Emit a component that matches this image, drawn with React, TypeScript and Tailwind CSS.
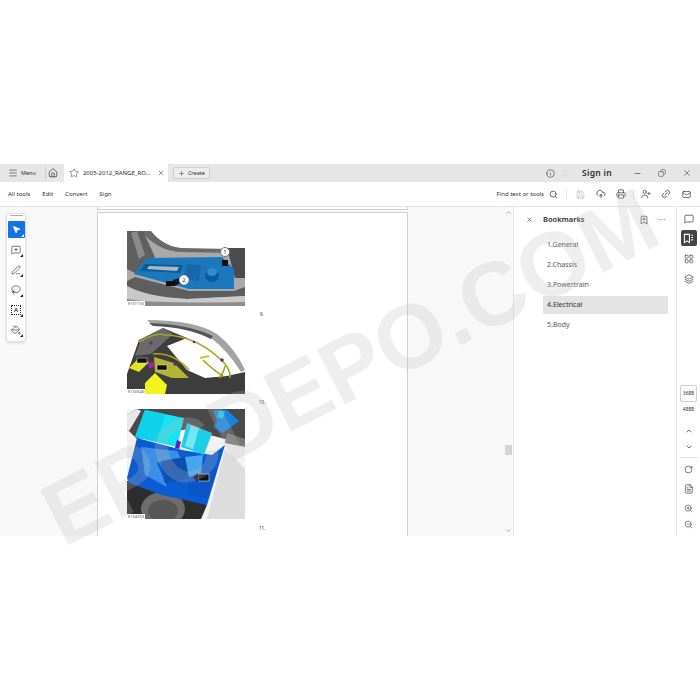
import {
  Bell,
  BookmarkPlus,
  ChevronDown,
  ChevronUp,
  CircleAlert,
  CloudUpload,
  Copy,
  Ellipsis,
  FileText,
  Home,
  Layers,
  LayoutGrid,
  Link2,
  Lasso,
  Mail,
  Menu,
  MessageSquare,
  MessageSquarePlus,
  Minus,
  MousePointer2,
  PaintBucket,
  PenLine,
  Plus,
  Printer,
  RotateCw,
  Save,
  Search,
  Star,
  UserPlus,
  X,
  ZoomIn,
  ZoomOut,
} from "lucide-react";

const bookmarks = ["1.General", "2.Chassis", "3.Powertrain", "4.Electrical", "5.Body"];

const Corner = () => (
  <span className="absolute right-[1px] bottom-[1px] w-0 h-0 border-l-[3px] border-l-transparent border-b-[3px] border-b-[#222]" />
);

const Caption = ({ text }: { text: string }) => (
  <span className="absolute left-0 bottom-0 px-[1px] bg-white text-[4px] leading-[5px] text-[#555]">{text}</span>
);

const BookmarksPanelIcon = () => (
  <svg viewBox="0 0 12 12" className="w-[11px] h-[11px]" fill="none" stroke="currentColor" strokeWidth="1.1">
    <path d="M1.5 1.5H7V10.5L4.25 8.5L1.5 10.5Z" />
    <path d="M9 2.5H11M9 5H11M9 7.5H11" />
  </svg>
);

const FigureOne = () => (
  <div className="relative w-[118px] h-[75px]">
    <svg viewBox="0 0 118 75" className="block w-full h-full blur-[0.5px]">
      <rect width="118" height="75" fill="#fff" />
      <path d="M0 0H22Q34 16 52 18L118 18V75H0Z" fill="#a9a9a9" />
      <path d="M0 0H24Q36 15 54 17L104 18V22L54 21Q30 20 14 0Z" fill="#6a6a6a" />
      <path d="M0 0H16L28 26L8 42L0 38Z" fill="#5f5f5f" />
      <path d="M4 2L10 0L18 24L12 28Z" fill="#8a8a8a" />
      <path d="M100 17H118V47H108Z" fill="#4b4b4b" />
      <path d="M0 50L8 46L62 60H107L118 56V65L60 68Q20 66 0 55Z" fill="#5e5e5e" />
      <path d="M0 55Q20 66 60 68L118 65V75H0Z" fill="#c9c9c9" />
      <path d="M0 68Q30 73 118 71V75H0Z" fill="#8c8c8c" />
      <path d="M7 43L20 27L95 26L107 38L107 58L62 58Z" fill="#1c78bd" />
      <path d="M18 33L56 34L53 42L13 40Z" fill="#0f5b97" />
      <path d="M22 35L52 36L50 40L20 38Z" fill="#a8bac6" />
      <path d="M60 33L74 34L72 50L56 48Z" fill="#1668a8" />
      <ellipse cx="85" cy="45" rx="7" ry="6" fill="#0f5b97" />
      <ellipse cx="85" cy="41" rx="5" ry="4" fill="#2d8ed0" />
      <rect x="95" y="29" width="6" height="6" fill="#111" />
      <rect x="39" y="50" width="9" height="5" fill="#111" />
      <path d="M46 49L52 47L53 52L48 55Z" fill="#111" />
    </svg>
    <span className="absolute left-[93px] top-[16px] flex items-center justify-center w-[10px] h-[10px] rounded-full bg-white border border-gray-500 text-[6px] leading-none">
      1
    </span>
    <span className="absolute left-[52px] top-[44px] flex items-center justify-center w-[10px] h-[10px] rounded-full bg-white border border-gray-300 text-[6px] leading-none">
      2
    </span>
    <Caption text="E131130" />
  </div>
);

const FigureTwo = () => (
  <div className="relative w-[118px] h-[74px]">
    <svg viewBox="0 0 118 74" className="block w-full h-full blur-[0.5px]">
      <rect width="118" height="74" fill="#fff" />
      <path d="M0 54L12 20L36 8L60 18L40 26L60 50L78 58L100 56L118 52V74H0Z" fill="#3d3d3d" />
      <path d="M14 20L36 8L46 14L24 34L8 36Z" fill="#6a6a6a" />
      <path d="M20 0Q68 0 90 14Q108 28 118 50L114 52Q100 30 84 18Q60 6 24 4Z" fill="#a3a3a3" />
      <path d="M22 3Q60 4 86 16L84 19Q60 7 26 6Z" fill="#555" />
      <path d="M2 48L10 40L22 42L12 52Z" fill="#e6e422" />
      <path d="M18 63L28 53L40 65L38 74H18Z" fill="#f5f31c" />
      <path d="M27 37L47 43L62 58L45 58L28 52Z" fill="#b5b333" />
      <path d="M12 22Q28 12 38 15Q68 16 92 38Q104 48 103 58M26 34Q46 32 62 50M76 40Q86 50 96 56M92 58Q97 52 98 46" stroke="#a6a41e" strokeWidth="1.6" fill="none" />
      <path d="M73 38L82 36" stroke="#c9c72a" strokeWidth="2" fill="none" />
      <rect x="10" y="38" width="10" height="5" fill="#111" stroke="#fff" strokeWidth="0.4" />
      <rect x="30" y="45" width="10" height="5" fill="#111" stroke="#fff" strokeWidth="0.4" />
      <circle cx="24" cy="45" r="3" fill="#9a2b9a" />
      <circle cx="24" cy="23" r="1.8" fill="#7d1f7d" />
      <circle cx="95" cy="40" r="1.8" fill="#7d1f7d" />
      <circle cx="48" cy="44" r="1.8" fill="#7d1f7d" />
      <circle cx="67" cy="22" r="1.3" fill="#7d1f7d" />
    </svg>
    <Caption text="E130346" />
  </div>
);

const FigureThree = () => (
  <div className="relative w-[118px] h-[110px]">
    <svg viewBox="0 0 118 110" className="block w-full h-full blur-[0.5px]">
      <rect width="118" height="110" fill="#f2f2f2" />
      <path d="M0 6L10 0H118V34L98 30L60 20L10 30L0 20Z" fill="#4a4a4a" />
      <path d="M0 6L10 0L14 2L2 22L0 20Z" fill="#e8e8e8" />
      <path d="M100 24L118 30V38L98 34Z" fill="#777" />
      <path d="M98 40L118 60V110H80Z" fill="#dddddd" />
      <path d="M0 72H30L80 96L74 110H0Z" fill="#2d2d2d" />
      <ellipse cx="36" cy="100" rx="22" ry="17" fill="#6d6d6d" />
      <ellipse cx="36" cy="102" rx="15" ry="11" fill="#565656" />
      <path d="M0 69L10 29L48 39L55 41L85 46L98 36L80 96L35 86L2 74Z" fill="#0a5cd2" />
      <path d="M14 38L50 42L54 50L30 54L40 78L18 66Z" fill="#3b8fe6" />
      <path d="M34 52L58 48L62 70L38 74Z" fill="#0d4fb0" />
      <path d="M58 48L76 46L74 64L62 68Z" fill="#4aa6ea" />
      <path d="M62 70L90 60L80 90L60 84Z" fill="#0a55c8" />
      <path d="M18 1L57 9L50 38L8 28Z" fill="#17e2f2" />
      <path d="M18 1L38 5L30 33L8 28Z" fill="#0fd2ea" />
      <path d="M60 14L85 24L77 46L54 38Z" fill="#1ccfe6" />
      <path d="M64 16L72 19L66 40L58 37Z" fill="#74e8f2" />
      <path d="M50 31L54 33L52 40L48 39Z" fill="#5a1fc0" />
      <path d="M86 1H100L112 12L96 24L86 18L90 12Z" fill="#1784e2" />
      <path d="M92 2L98 2L96 10L90 8Z" fill="#22c4e8" />
      <rect x="71" y="65" width="11" height="7" fill="#111" stroke="#fff" strokeWidth="0.5" />
      <path d="M71 64L66 68.5L71 73Z" fill="#111" />
    </svg>
    <Caption text="E134353" />
  </div>
);

const App = () => {
  return (
    <div className="relative w-[700px] h-[700px] overflow-hidden bg-white font-['Noto_Sans',sans-serif] text-[#2c2c2c]">
      <div className="h-[164px]" />
      <div className="flex flex-col h-[372px]">
        {/* Tab bar */}
        <div className="flex items-center h-[18px] bg-[#e6e6e6] pl-2 pr-2">
          <Menu size={10} strokeWidth={1.4} />
          <span className="ml-[3px] text-[5.5px]">Menu</span>
          <div className="ml-[9px] w-px h-[12px] bg-[#cfcfcf]" />
          <Home size={10} strokeWidth={1.6} className="ml-[2px]" />
          <div className="flex items-center ml-[6px] w-[104px] h-full bg-white pl-[5px]">
            <Star size={10} strokeWidth={1.2} />
            <span className="ml-[4px] text-[6px] whitespace-nowrap">2005-2012_RANGE_RO...</span>
            <X size={8} strokeWidth={1.5} className="ml-[7px]" />
          </div>
          <div className="flex items-center ml-[5px] h-[12px] px-[4px] gap-[3px] rounded-[2px] border border-[#cfcfcf] bg-[#ececec]">
            <Plus size={7} strokeWidth={1.5} />
            <span className="text-[5.5px]">Create</span>
          </div>
          <div className="flex items-center ml-auto">
            <CircleAlert size={9} strokeWidth={1.5} className="rotate-180" />
            <Bell size={9} strokeWidth={1.2} className="ml-[6px] text-[#cfcfcf]" />
            <span className="ml-[12px] text-[8.5px] font-semibold tracking-[0.3px]">Sign in</span>
            <Minus size={9} strokeWidth={1.5} className="ml-[21px]" />
            <Copy size={8} strokeWidth={1.5} className="ml-[16px] -scale-x-100" />
            <X size={10} strokeWidth={1.3} className="ml-[16px]" />
          </div>
        </div>

        {/* Tools bar */}
        <div className="flex items-center h-[25px] bg-white border-b border-[#e4e4e4] pl-2 pr-[9px] text-[6px]">
          <span>All tools</span>
          <span className="ml-[12px]">Edit</span>
          <span className="ml-[12px]">Convert</span>
          <span className="ml-[12px]">Sign</span>
          <div className="flex items-center ml-auto">
            <span className="text-[6px]">Find text or tools</span>
            <Search size={9} strokeWidth={1.8} className="ml-[5px]" />
            <div className="ml-[8px] w-px h-[10px] bg-[#e4e4e4]" />
            <Save size={9} strokeWidth={1.2} className="ml-[9px] text-[#999]" />
            <CloudUpload size={10} strokeWidth={1.8} className="ml-[11px]" />
            <Printer size={10} strokeWidth={1.6} className="ml-[10px]" />
            <div className="ml-[7px] w-px h-[10px] bg-[#e4e4e4]" />
            <UserPlus size={10} strokeWidth={1.5} className="ml-[7px]" />
            <Link2 size={10} strokeWidth={1.6} className="ml-[10px] -rotate-45" />
            <Mail size={9} strokeWidth={1.7} className="ml-[11px]" />
          </div>
        </div>

        {/* Main */}
        <div className="flex flex-1 min-h-0">
          <div className="flex flex-1 min-h-0 bg-[#f8f8f8]">
            <div className="w-[97px] pl-[6px] pt-[6px]">
              <div className="flex flex-col items-center w-[20px] h-[129px] bg-white border border-[#e0e0e0] rounded-[3px] shadow-sm">
                <div className="mt-[1px] w-[13px] h-[1px] bg-[#aaa]" />
                <div className="relative flex items-center justify-center mt-[5px] w-[17px] h-[17px] bg-[#1473e6] rounded-[1px]">
                  <MousePointer2 size={9} className="text-white fill-white" />
                  <span className="absolute right-[1px] bottom-[1px] w-0 h-0 border-l-[3px] border-l-transparent border-b-[3px] border-b-white" />
                </div>
                {[MessageSquarePlus, PenLine, Lasso].map((Icon, i) => (
                  <div key={i} className="relative flex items-center justify-center mt-[3px] w-[16px] h-[17px]">
                    <Icon size={10} strokeWidth={1.5} />
                    <Corner />
                  </div>
                ))}
                <div className="relative flex items-center justify-center mt-[3px] w-[16px] h-[17px]">
                  <span className="flex items-center justify-center w-[10px] h-[10px] border border-dotted border-[#222] text-[6px] leading-none font-semibold">
                    A
                  </span>
                  <Corner />
                </div>
                <div className="relative flex items-center justify-center mt-[3px] w-[16px] h-[17px]">
                  <PaintBucket size={10} strokeWidth={1.5} />
                  <Corner />
                </div>
              </div>
            </div>

            {/* Document */}
            <div className="w-[311px] flex flex-col overflow-hidden">
              <div className="h-[2px] bg-white border-x border-b border-[#d0d0d0] box-content" />
              <div className="h-[2px]" />
              <div className="flex-1 bg-white border-x border-t border-[#d0d0d0] pl-[29px] pt-[18px]">
                <FigureOne />
                <div className="pl-[133px] text-[4.5px] leading-[6px] mt-[5px]">9.</div>
                <div className="mt-[3px]">
                  <FigureTwo />
                </div>
                <div className="pl-[132px] text-[4.5px] leading-[6px] mt-[5px]">10.</div>
                <div className="mt-[4px]">
                  <FigureThree />
                </div>
                <div className="pl-[132px] text-[4.5px] leading-[6px] mt-[6px]">11.</div>
              </div>
            </div>

            {/* Scrollbar */}
            <div className="relative flex-1">
              <div className="absolute right-0 top-0 bottom-0 w-[9px] bg-[#f8f8f8] flex flex-col items-center justify-between py-[2px] text-[#777]">
                <ChevronUp size={7} strokeWidth={2} />
                <ChevronDown size={7} strokeWidth={2} />
              </div>
              <div className="absolute right-[1px] top-[238px] w-[7px] h-[10px] bg-[#d4d4d4]" />
            </div>
          </div>

          {/* Bookmarks */}
          <div className="w-[163px] shrink-0 bg-white border-l border-[#e4e4e4] pl-[12px] pr-[8px] flex flex-col">
            <div className="flex items-center h-[25px]">
              <X size={7} strokeWidth={2} />
              <span className="ml-[10px] text-[7.5px] font-semibold">Bookmarks</span>
              <BookmarkPlus size={10} strokeWidth={1.5} className="ml-auto mr-[8px]" />
              <Ellipsis size={9} strokeWidth={1} className="mr-[2px] text-[#777]" />
            </div>
            <div className="flex flex-col ml-[17px] mt-[4px] gap-[2px] text-[7px] text-[#555]">
              {bookmarks.map((name) => (
                <div
                  key={name}
                  className={
                    name === "4.Electrical"
                      ? "flex items-center h-[18px] pl-[4px] bg-[#e3e3e3] text-[#2c2c2c]"
                      : "flex items-center h-[18px] pl-[4px]"
                  }
                >
                  {name}
                </div>
              ))}
            </div>
          </div>

          {/* Right rail */}
          <div className="w-[24px] shrink-0 flex flex-col items-center bg-white border-l border-[#e4e4e4] pt-[7px]">
            <MessageSquare size={10} strokeWidth={1.6} />
            <div className="flex items-center justify-center mt-[6px] w-[16px] h-[16px] bg-[#444] rounded-[2px] text-white">
              <BookmarksPanelIcon />
            </div>
            <LayoutGrid size={10} strokeWidth={1.4} className="mt-[8px]" />
            <Layers size={10} strokeWidth={1.5} className="mt-[10px]" />
            <div className="flex items-center justify-center mt-[101px] w-[17px] h-[17px] shrink-0 rounded-[2px] border border-[#cfcfcf] text-[5px]">
              3688
            </div>
            <span className="mt-[4px] text-[5px]">4888</span>
            <ChevronUp size={8} strokeWidth={2} className="mt-[13px]" />
            <ChevronDown size={8} strokeWidth={2} className="mt-[8px]" />
            <div className="mt-[6px] w-[18px] h-px bg-[#e4e4e4] shrink-0" />
            <RotateCw size={9} strokeWidth={1.6} className="mt-[7px]" />
            <FileText size={10} strokeWidth={1.5} className="mt-[10px]" />
            <ZoomIn size={9} strokeWidth={1.5} className="mt-[10px]" />
            <ZoomOut size={9} strokeWidth={1.5} className="mt-[7px]" />
          </div>
        </div>
      </div>

      {/* Watermark */}
      <div className="absolute left-0 top-[322px] w-[700px] text-center -rotate-[27deg] text-[90px] leading-none font-bold text-[#bdbdbd]/25 whitespace-nowrap pointer-events-none font-['Liberation_Sans',sans-serif]">
        EPCDEPO.COM
      </div>
    </div>
  );
};

export default App;
